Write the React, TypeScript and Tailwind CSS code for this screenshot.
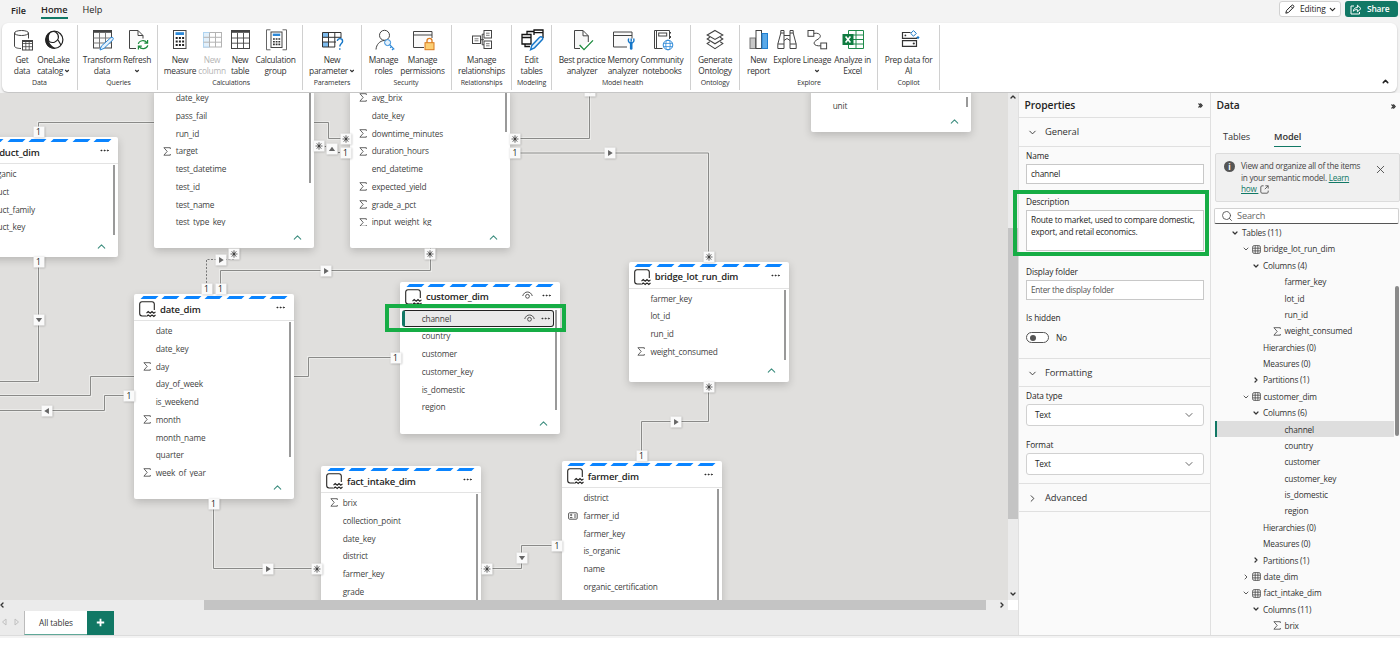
import type { ReactNode } from "react";
import { clsx } from "clsx";
import { ChevronDown, ChevronRight, ChevronUp, Ellipsis, Search, X } from "lucide-react";

type FieldType = { name: string; kind?: "sum" | "id"; selected?: boolean };

type TableType = {
  name?: string;
  x: number;
  y: number;
  height: number;
  thumb: number;
  inset?: number;
  hasEye?: boolean;
  fields: FieldType[];
};

type TagType = { x: number; y: number; mark: "1" | "*" | "right" | "left" | "up" | "down" };

type TreeRowType = {
  label: string;
  level: 0 | 1 | 2 | 3;
  open?: boolean;
  closed?: boolean;
  sum?: boolean;
  selected?: boolean;
};

const tables: TableType[] = [
  {
    name: "product_dim",
    x: -42,
    y: 44,
    height: 120,
    thumb: 70,
    fields: [{ name: "is_organic" }, { name: "product" }, { name: "product_family" }, { name: "product_key" }],
  },
  {
    x: 154,
    y: -4,
    height: 159,
    thumb: 94,
    fields: [
      { name: "date_key" },
      { name: "pass_fail" },
      { name: "run_id" },
      { name: "target", kind: "sum" },
      { name: "test_datetime" },
      { name: "test_id" },
      { name: "test_name" },
      { name: "test_type_key" },
    ],
  },
  {
    x: 350,
    y: -4,
    height: 159,
    thumb: 43,
    fields: [
      { name: "avg_brix", kind: "sum" },
      { name: "date_key" },
      { name: "downtime_minutes", kind: "sum" },
      { name: "duration_hours", kind: "sum" },
      { name: "end_datetime" },
      { name: "expected_yield", kind: "sum" },
      { name: "grade_a_pct", kind: "sum" },
      { name: "input_weight_kg", kind: "sum" },
    ],
  },
  { x: 811, y: -6, height: 45, thumb: 10, inset: 9.5, fields: [{ name: "unit" }] },
  {
    name: "date_dim",
    x: 134,
    y: 201,
    height: 204.5,
    thumb: 135,
    fields: [
      { name: "date" },
      { name: "date_key" },
      { name: "day", kind: "sum" },
      { name: "day_of_week" },
      { name: "is_weekend" },
      { name: "month", kind: "sum" },
      { name: "month_name" },
      { name: "quarter" },
      { name: "week_of_year", kind: "sum" },
    ],
  },
  {
    name: "customer_dim",
    x: 400,
    y: 188.5,
    height: 152.5,
    thumb: 100,
    hasEye: true,
    fields: [
      { name: "channel", selected: true },
      { name: "country" },
      { name: "customer" },
      { name: "customer_key" },
      { name: "is_domestic" },
      { name: "region" },
    ],
  },
  {
    name: "bridge_lot_run_dim",
    x: 628.7,
    y: 168.5,
    height: 120,
    thumb: 70,
    fields: [
      { name: "farmer_key" },
      { name: "lot_id" },
      { name: "run_id" },
      { name: "weight_consumed", kind: "sum" },
    ],
  },
  {
    name: "fact_intake_dim",
    x: 321,
    y: 373,
    height: 220,
    thumb: 160,
    fields: [
      { name: "brix", kind: "sum" },
      { name: "collection_point" },
      { name: "date_key" },
      { name: "district" },
      { name: "farmer_key" },
      { name: "grade" },
    ],
  },
  {
    name: "farmer_dim",
    x: 561.7,
    y: 368,
    height: 220,
    thumb: 160,
    fields: [
      { name: "district" },
      { name: "farmer_id", kind: "id" },
      { name: "farmer_key" },
      { name: "is_organic" },
      { name: "name" },
      { name: "organic_certification" },
    ],
  },
];

const links = [
  "M38.5 44V29.5H328.5V45.5H345",
  "M510 45.5H589.5V0",
  "M510 60H708.5V165",
  "M38.5 164V288.5H0",
  "M0 302.5H90.5V283.5H308.5V264.5H400",
  "M0 317.5H104.5V302.5H134",
  "M220.5 200V177.5H430.5V155",
  "M213.5 405V475.5H321",
  "M481 475.5H521.5V452.5H562",
  "M708.5 288V328.5H641.5V368",
];

const tags: TagType[] = [
  { x: 38.5, y: 38.5, mark: "1" },
  { x: 38.5, y: 169, mark: "1" },
  { x: 38.5, y: 226.5, mark: "down" },
  { x: 319, y: 53, mark: "*" },
  { x: 332, y: 56, mark: "up" },
  { x: 346, y: 45.5, mark: "*" },
  { x: 345.5, y: 60, mark: "1" },
  { x: 515, y: 45.5, mark: "*" },
  { x: 515, y: 60, mark: "1" },
  { x: 589.5, y: -2, mark: "down" },
  { x: 609.5, y: 60, mark: "right" },
  { x: 708.5, y: 163.5, mark: "*" },
  { x: 708.5, y: 293.5, mark: "*" },
  { x: 234, y: 160.5, mark: "*" },
  { x: 220.5, y: 166.5, mark: "right" },
  { x: 206.5, y: 195.5, mark: "1" },
  { x: 220.5, y: 195.5, mark: "1" },
  { x: 325.5, y: 177.5, mark: "right" },
  { x: 430, y: 160.5, mark: "*" },
  { x: 46.5, y: 317.5, mark: "left" },
  { x: 129, y: 303, mark: "1" },
  { x: 395.5, y: 264.5, mark: "1" },
  { x: 213.5, y: 410.5, mark: "1" },
  { x: 268, y: 475.5, mark: "right" },
  { x: 317, y: 475.5, mark: "*" },
  { x: 486.5, y: 475.5, mark: "*" },
  { x: 521.5, y: 464.5, mark: "down" },
  { x: 557, y: 453, mark: "1" },
  { x: 676, y: 328.5, mark: "right" },
  { x: 641.5, y: 363, mark: "1" },
];

const tree: TreeRowType[] = [
  { label: "Tables (11)", level: 0, open: true },
  { label: "bridge_lot_run_dim", level: 1, open: true },
  { label: "Columns (4)", level: 2, open: true },
  { label: "farmer_key", level: 3 },
  { label: "lot_id", level: 3 },
  { label: "run_id", level: 3 },
  { label: "weight_consumed", level: 3, sum: true },
  { label: "Hierarchies (0)", level: 2 },
  { label: "Measures (0)", level: 2 },
  { label: "Partitions (1)", level: 2, closed: true },
  { label: "customer_dim", level: 1, open: true },
  { label: "Columns (6)", level: 2, open: true },
  { label: "channel", level: 3, selected: true },
  { label: "country", level: 3 },
  { label: "customer", level: 3 },
  { label: "customer_key", level: 3 },
  { label: "is_domestic", level: 3 },
  { label: "region", level: 3 },
  { label: "Hierarchies (0)", level: 2 },
  { label: "Measures (0)", level: 2 },
  { label: "Partitions (1)", level: 2, closed: true },
  { label: "date_dim", level: 1, closed: true },
  { label: "fact_intake_dim", level: 1, open: true },
  { label: "Columns (11)", level: 2, open: true },
  { label: "brix", level: 3, sum: true },
];

/* ---------- small icons ---------- */

const Sigma = () => (
  <svg width="8" height="9" viewBox="0 0 8 9" fill="none" stroke="#555" strokeWidth="0.9">
    <path d="M7.3 2V0.7H0.9L4.2 4.4L0.9 8.2H7.3V7" />
  </svg>
);

const IdCard = () => (
  <svg width="10" height="8" viewBox="0 0 10 8" fill="none" stroke="#444" strokeWidth="0.9">
    <rect x="0.6" y="0.8" width="8.6" height="6.4" rx="1" />
    <path d="M2 5.6H4.4M6 3H8M6 5H8" />
    <circle cx="3.2" cy="3" r="0.7" />
  </svg>
);

const Eye = () => (
  <svg width="11" height="9" viewBox="0 0 11 9" fill="none" stroke="#444" strokeWidth="0.9">
    <path d="M0.7 5C1.5 2.4 3.3 1 5.5 1S9.5 2.4 10.3 5" />
    <circle cx="5.5" cy="5.3" r="1.9" />
  </svg>
);

const StorageIcon = () => (
  <svg width="17" height="17" viewBox="0 0 17 17" fill="none" stroke="#252423" strokeWidth="1.1">
    <path d="M7 15H3A2.4 2.4 0 0 1 0.7 12.6V3A2.4 2.4 0 0 1 3 0.7H13A2.4 2.4 0 0 1 15.3 3V9" />
    <path d="M7.5 12.2L9.2 10.6L11.2 12.2L13 10.6L14.8 12.2L16.5 10.8M7.5 15.5L9.2 13.9L11.2 15.5L13 13.9L14.8 15.5L16.5 14" />
  </svg>
);

const GridIcon = () => (
  <svg width="9" height="9" viewBox="0 0 9 9" fill="none" stroke="#444" strokeWidth="0.8">
    <rect x="0.6" y="0.6" width="7.8" height="7.8" rx="1.6" />
    <path d="M3.2 0.6V8.4M5.9 0.6V8.4M0.6 3.2H8.4M0.6 5.9H8.4" />
  </svg>
);

const DoubleChevron = () => (
  <svg width="5" height="5" viewBox="0 0 5 5" fill="none" stroke="#333" strokeWidth="1.1">
    <path d="M0.5 0.5L2.4 2.5L0.5 4.5M2.3 0.5L4.2 2.5L2.3 4.5" />
  </svg>
);

/* ---------- ribbon icons, all on a 24x22 grid ---------- */

const RibbonSvg = ({ children, faded }: { children: ReactNode; faded?: boolean }) => (
  <svg
    width="24"
    height="22"
    viewBox="0 0 24 22"
    fill="none"
    stroke="#444"
    strokeWidth="1"
    className={clsx("shrink-0", faded && "opacity-40")}
  >
    {children}
  </svg>
);

const icons = {
  getData: (
    <RibbonSvg>
      <path d="M4.5 4V17C4.5 18.5 7.5 19.5 11 19.5M18.5 4V9.5" />
      <ellipse cx="11.5" cy="4" rx="7" ry="2.5" />
      <rect x="12.5" y="11.5" width="10" height="9.5" fill="#fff" />
      <path d="M12.5 14.5H22.5M12.5 17.7H22.5M15.8 12V21M19.2 12V21" strokeWidth="0.8" />
      <path d="M12.5 12.2H22.5" strokeWidth="1.6" />
    </RibbonSvg>
  ),
  oneLake: (
    <RibbonSvg>
      <circle cx="12.3" cy="10.8" r="8.6" strokeWidth="1.2" stroke="#222" />
      <path d="M7 4.6C4.6 9.3 5.8 15.4 12.4 19C4.6 20 0.8 9.6 7 4.6Z" fill="#222" stroke="#222" />
      <path d="M8 3.6C12.8 0.6 17 4.5 16.4 9.2C15 13.4 10.5 14.5 7 12.5C5.8 9 6.2 5.6 8 3.6Z" stroke="#222" strokeWidth="1.1" />
      <path d="M15.8 10.6L19 16" stroke="#222" strokeWidth="1.1" />
    </RibbonSvg>
  ),
  transform: (
    <RibbonSvg>
      <rect x="3.5" y="1.5" width="18" height="17.5" fill="#fafafa" />
      <path d="M3.5 2.8H21.5" strokeWidth="2" />
      <path d="M3.5 9H21.5M3.5 14H21.5M9.5 4V19M15.5 4V19" stroke="#777" />
      <path d="M21 8.5C22.5 7.6 24 9.2 23 10.7L14 19.4L10 21L11.4 17Z" fill="#e4f1fc" stroke="#2b88d8" />
    </RibbonSvg>
  ),
  refresh: (
    <RibbonSvg>
      <path d="M11 19.5H4.5V1.5H13L18 6.5V9.5M13 1.5V6.5H18" fill="#fafafa" />
      <path d="M13.3 14.8C14.2 11.4 19.5 10.5 22 13.6M22.6 11V14.2H19.4M22.8 16.4C21.8 20 16.4 20.8 14 17.6M13.4 20.6V17.2H16.8" stroke="#1a8a3c" strokeWidth="1.2" />
    </RibbonSvg>
  ),
  measure: (
    <RibbonSvg>
      <rect x="5.5" y="1.5" width="12.5" height="18" fill="#fff" />
      <rect x="7.5" y="3.2" width="8.5" height="2.8" fill="#2b88d8" stroke="none" />
      <path d="M7.7 9H16.4M7.7 12.5H16.4M7.7 16H16.4" stroke="#222" strokeWidth="2" strokeDasharray="2 1.2" />
    </RibbonSvg>
  ),
  column: (
    <RibbonSvg faded>
      <rect x="3.5" y="3.5" width="18" height="14.5" />
      <rect x="3.5" y="3.5" width="6" height="14.5" fill="#b7dcf7" stroke="#3a96dd" />
      <path d="M3.5 8.3H21.5M3.5 13.2H21.5M9.5 3.5V18M15.5 3.5V18" />
    </RibbonSvg>
  ),
  table: (
    <RibbonSvg>
      <rect x="3.5" y="1.5" width="18" height="18" />
      <path d="M3.5 2.8H21.5" strokeWidth="2" />
      <path d="M3.5 9H21.5M3.5 14.2H21.5M9.5 4V19.5M15.5 4V19.5" strokeWidth="0.9" />
    </RibbonSvg>
  ),
  calcGroup: (
    <RibbonSvg>
      <path d="M6.5 0.8H2.5V20.8H6.5M18.5 0.8H22.5V20.8H18.5" stroke="#666" />
      <rect x="7" y="3" width="11" height="15.5" />
      <rect x="8.8" y="4.6" width="7.4" height="2.4" fill="#2b88d8" stroke="none" />
      <path d="M9 10H16.2M9 12.7H16.2M9 15.4H16.2" stroke="#333" strokeWidth="1.6" strokeDasharray="1.8 0.9" />
    </RibbonSvg>
  ),
  parameter: (
    <RibbonSvg>
      <rect x="2.5" y="3.5" width="6" height="4.8" fill="#7dbbed" stroke="none" />
      <rect x="2.5" y="13" width="6" height="5" fill="#7dbbed" stroke="none" />
      <path d="M15 18H2.5V3.5H21V9M2.5 8.3H21M2.5 13H16M8.5 3.5V18M14.8 3.5V18" stroke="#333" />
      <path d="M17.4 12C17.4 8.8 22.6 8.8 22.6 12.2C22.6 14.6 19.8 14.3 19.8 17.4M19.8 19.2V20.8" stroke="#1576c8" strokeWidth="1.4" />
    </RibbonSvg>
  ),
  roles: (
    <RibbonSvg>
      <circle cx="12.5" cy="6.3" r="5" />
      <path d="M4 20.5C4.4 15.5 7.5 12 12.5 11.4" />
      <circle cx="15.6" cy="13.6" r="3" stroke="#2b88d8" fill="#e4f1fc" />
      <path d="M17.6 15.6L22.3 20.3M21.5 19.4L20 21M19.5 17.5L18.2 18.8" stroke="#2b88d8" strokeWidth="1.2" />
    </RibbonSvg>
  ),
  permissions: (
    <RibbonSvg>
      <path d="M13 18.5H2.5V2.5H21V9M2.5 6H21" fill="#fafafa" />
      <path d="M16 14V11.6C16 8.6 21 8.6 21 11.6V14" stroke="#d97a1e" strokeWidth="1.3" />
      <rect x="14" y="13.7" width="9" height="7" fill="#fccf74" stroke="#d97a1e" />
    </RibbonSvg>
  ),
  relationships: (
    <RibbonSvg>
      <rect x="2.5" y="7" width="8" height="7.5" />
      <rect x="14" y="1.5" width="7.5" height="7.5" />
      <rect x="14" y="12" width="7.5" height="7.5" />
      <path d="M10.5 10.7H14M12.2 5.2V15.8M12.2 5.2H14M12.2 15.8H14" />
      <path d="M4.5 9.8H8.5M4.5 11.8H8.5M16 4.2H19.6M16 6.3H19.6M16 14.7H19.6M16 16.8H19.6" strokeWidth="0.7" />
    </RibbonSvg>
  ),
  edit: (
    <RibbonSvg>
      <path d="M2 5.5H11V15H2ZM2 8.5H11M7 5V2.5H14M14 6V1H23V9M14 3.6H23M5 15V17.5H10" stroke="#111" strokeWidth="1.3" />
      <path d="M19.6 8.2C21.4 6.8 23.6 8.8 22.4 10.6L14.5 18.8L10.6 20.6L11.8 16.4Z" fill="#e4f1fc" stroke="#1576c8" strokeWidth="1.4" />
    </RibbonSvg>
  ),
  bestPractice: (
    <RibbonSvg>
      <path d="M10 19.5H4.5V1.5H13L18.3 6.8V13M13 1.5V6.8H18.3" fill="#f7f7f7" />
      <path d="M9.6 16L14 20.6L23 11.4" stroke="#1a8a3c" strokeWidth="1.3" />
    </RibbonSvg>
  ),
  memory: (
    <RibbonSvg>
      <path d="M16 18H2.5V3H21V9.5M2.5 6.5H21" fill="#fafafa" />
      <path d="M20.2 13.5V19.5" stroke="#1576c8" strokeWidth="2.6" strokeLinecap="round" />
      <path d="M17.8 9.5C16.6 12.2 18.2 14 20.2 14S23.6 12.2 22.6 9.5M20.2 9.5V12" stroke="#1576c8" strokeWidth="1.4" />
    </RibbonSvg>
  ),
  community: (
    <RibbonSvg>
      <path d="M12.5 19.5H4.5V1.5H19.5V10M6.5 1.5V19.5M20.5 3V4.5M20.5 7V9" />
      <rect x="8.7" y="4" width="8" height="3" />
      <circle cx="18" cy="16" r="4.8" stroke="#2b88d8" fill="#fff" />
      <ellipse cx="18" cy="16" rx="2.2" ry="4.8" stroke="#2b88d8" strokeWidth="0.8" />
      <path d="M13.4 14.4H22.6M13.4 17.6H22.6" stroke="#2b88d8" strokeWidth="0.8" />
    </RibbonSvg>
  ),
  ontology: (
    <RibbonSvg>
      <path d="M12 1.5L19.8 6L12 10.4L4.2 6ZM6.8 8.2L4.2 10L12 14.8L19.8 10L17.2 8.2M6.8 12.8L4.2 14.6L12 19.6L19.8 14.6L17.2 12.8" strokeWidth="1.1" />
    </RibbonSvg>
  ),
  report: (
    <RibbonSvg>
      <rect x="3" y="9" width="5.5" height="10.5" fill="#c8c8c8" stroke="#777" />
      <rect x="9" y="1.5" width="5.5" height="18" fill="#fff" />
      <rect x="15" y="4.5" width="5.5" height="15" fill="#5aa9e8" stroke="#1f7fd1" />
    </RibbonSvg>
  ),
  explore: (
    <RibbonSvg>
      <path d="M5.8 4L2.8 15.2V19.5H9V4ZM5.8 4V1.5H9V4M15 4V19.5H21.2V15.2L18.2 4ZM15 4V1.5H18.2V4M2.8 15H9M15 15H21.2M9 6.5H15M9 11.5L12 9.5L15 11.5" />
    </RibbonSvg>
  ),
  lineage: (
    <RibbonSvg>
      <rect x="3" y="1.5" width="5.8" height="5.8" />
      <rect x="15.8" y="14" width="5.8" height="5.8" />
      <path d="M8.8 4.4C15 3.2 17.6 7.4 13 10.2C6.5 13.4 8.6 17.4 15.8 16.8" />
    </RibbonSvg>
  ),
  excel: (
    <RibbonSvg>
      <path d="M7.5 1.5H22.5V19.5H7.5ZM15 1.5V19.5M7.5 6H22.5M7.5 10.5H22.5M7.5 15H22.5" stroke="#1e8a4a" />
      <rect x="1.5" y="5" width="11" height="11" fill="#107c41" stroke="none" />
      <path d="M4.6 7.6L9.4 13.4M9.4 7.6L4.6 13.4" stroke="#fff" strokeWidth="1.6" />
    </RibbonSvg>
  ),
  prep: (
    <RibbonSvg>
      <path d="M13.5 3.5H5.5V9.3H19.5V8.6M5.5 11.6H19.5V17.4H5.5Z" strokeWidth="1.2" stroke="#333" />
      <circle cx="8.4" cy="6.4" r="0.9" fill="#333" stroke="none" />
      <circle cx="16.8" cy="14.5" r="1.1" fill="#333" stroke="none" />
      <path d="M16.5 1.6L19.3 4.4L16.5 7.2L13.7 4.4Z" stroke="#1576c8" fill="#fff" />
      <path d="M21 7L22.6 8.6L21 10.2L19.4 8.6Z" fill="#1576c8" stroke="none" />
    </RibbonSvg>
  ),
};

type RibbonItemType = {
  icon: ReactNode;
  lines: [string, string];
  width: string;
  arrow?: boolean;
  disabled?: boolean;
};

const ribbon: { label: string; box: string; items: RibbonItemType[] }[] = [
  {
    label: "Data",
    box: "w-[76px] pl-[4px]",
    items: [
      { icon: icons.getData, lines: ["Get", "data"], width: "w-[32px]" },
      { icon: icons.oneLake, lines: ["OneLake", "catalog"], width: "w-[31px]", arrow: true },
    ],
  },
  {
    label: "Queries",
    box: "w-[80px] pl-[6px]",
    items: [
      { icon: icons.transform, lines: ["Transform", "data"], width: "w-[36px]" },
      { icon: icons.refresh, lines: ["Refresh", ""], width: "w-[34px]", arrow: true },
    ],
  },
  {
    label: "Calculations",
    box: "w-[145px] pl-[6px]",
    items: [
      { icon: icons.measure, lines: ["New", "measure"], width: "w-[32px]" },
      { icon: icons.column, lines: ["New", "column"], width: "w-[32px]", disabled: true },
      { icon: icons.table, lines: ["New", "table"], width: "w-[24px]" },
      { icon: icons.calcGroup, lines: ["Calculation", "group"], width: "w-[47px]" },
    ],
  },
  {
    label: "Parameters",
    box: "w-[59px]",
    items: [{ icon: icons.parameter, lines: ["New", "parameter"], width: "w-[58px]", arrow: true }],
  },
  {
    label: "Security",
    box: "w-[90px] pl-[3px]",
    items: [
      { icon: icons.roles, lines: ["Manage", "roles"], width: "w-[37px]" },
      { icon: icons.permissions, lines: ["Manage", "permissions"], width: "w-[41px]" },
    ],
  },
  {
    label: "Relationships",
    box: "w-[60px]",
    items: [{ icon: icons.relationships, lines: ["Manage", "relationships"], width: "w-[59px]" }],
  },
  {
    label: "Modeling",
    box: "w-[40px]",
    items: [{ icon: icons.edit, lines: ["Edit", "tables"], width: "w-[39px]" }],
  },
  {
    label: "Model health",
    box: "w-[139px] pl-[7px]",
    items: [
      { icon: icons.bestPractice, lines: ["Best practice", "analyzer"], width: "w-[46px]" },
      { icon: icons.memory, lines: ["Memory", "analyzer"], width: "w-[36px]" },
      { icon: icons.community, lines: ["Community", "notebooks"], width: "w-[42px]" },
    ],
  },
  {
    label: "Ontology",
    box: "w-[49px]",
    items: [{ icon: icons.ontology, lines: ["Generate", "Ontology"], width: "w-[48px]" }],
  },
  {
    label: "Explore",
    box: "w-[138px] pl-[5px]",
    items: [
      { icon: icons.report, lines: ["New", "report"], width: "w-[27px]" },
      { icon: icons.explore, lines: ["Explore", ""], width: "w-[30px]" },
      { icon: icons.lineage, lines: ["Lineage", ""], width: "w-[30px]", arrow: true },
      { icon: icons.excel, lines: ["Analyze in", "Excel"], width: "w-[41px]" },
    ],
  },
  {
    label: "Copilot",
    box: "w-[62px]",
    items: [{ icon: icons.prep, lines: ["Prep data for", "AI"], width: "w-[61px]" }],
  },
];

const RibbonItem = ({ item }: { item: RibbonItemType }) => (
  <div
    className={clsx(
      "flex shrink-0 flex-col items-center whitespace-nowrap text-[8.4px] leading-[11.5px] tracking-[-0.28px]",
      item.width,
      item.disabled ? "text-[#b5b5b5]" : "text-[#333]",
    )}
  >
    {item.icon}
    <span className="mt-[2.5px]">{item.lines[0]}</span>
    <span className="flex h-[11.5px] items-center gap-[1px]">
      {item.lines[1]}
      {item.arrow && <ChevronDown size={6} strokeWidth={4.5} />}
    </span>
  </div>
);

const Ribbon = () => (
  <div className="mx-[2px] mr-[3px] flex h-[69px] rounded-[6px] bg-white shadow-[0_1px_2px_rgba(0,0,0,0.25)]">
    {ribbon.map((group) => (
      <div key={group.label} className="flex shrink-0 py-[2px]">
        <div className={clsx("flex flex-col border-r border-[#d0d0d0]", group.box)}>
          <div className="flex h-[53px] pt-[4px]">
            {group.items.map((item) => (
              <RibbonItem key={item.lines.join()} item={item} />
            ))}
          </div>
          <span
            className={clsx(
              "self-center whitespace-nowrap text-[7px] leading-[10px] tracking-[-0.15px] text-[#333]",
              group.items.length > 1 && "-translate-x-[2px]",
            )}
          >
            {group.label}
          </span>
        </div>
      </div>
    ))}
    <div className="flex flex-1 items-end justify-end pr-[7px] pb-[6px]">
      <ChevronUp size={9} strokeWidth={4} color="#222" />
    </div>
  </div>
);

const TopBar = () => (
  <div className="flex h-[23px] items-start pl-[11px] text-[9.2px] text-[#252423]">
    <span className="mt-[4px] text-[9px] leading-[13px] font-semibold">File</span>
    <div className="ml-[15px] flex flex-col">
      <span className="mt-[3px] leading-[13px] font-semibold">Home</span>
      <span className="mt-[1px] h-[2px] bg-[#117865]" />
    </div>
    <span className="mt-[3px] ml-[15px] leading-[13px]">Help</span>
    <div className="ml-auto flex gap-[4px] pt-[1px] text-[8.4px] tracking-[-0.15px]">
      <button className="flex h-[16px] w-[62px] items-center rounded-[3px] border border-[#d1d1d1] bg-white pl-[5px]">
        <svg width="10" height="10" viewBox="0 0 10 10" fill="none" stroke="#222" strokeWidth="1">
          <path d="M6.6 1.4C7.5 0.3 9.6 1.8 8.6 3.2L3.4 8.5L0.8 9.2L1.5 6.6ZM5.8 2.3L7.7 4.2" />
        </svg>
        <span className="ml-[5px] font-medium">Editing</span>
        <ChevronDown size={9} strokeWidth={3} className="ml-[2px]" />
      </button>
      <button className="mr-[2px] flex h-[16px] w-[53px] items-center rounded-[3px] bg-[#117865] pl-[5px] font-semibold text-white">
        <svg width="12" height="11" viewBox="0 0 12 11" fill="none" stroke="#fff" strokeWidth="1">
          <path d="M4 2H1V10H9.5V8M3.4 7.2C3.6 4.6 5 3.6 7.4 3.6V1.2L11 4.6L7.4 7.8V5.6C5.6 5.4 4.4 6 3.4 7.2Z" />
        </svg>
        <span className="ml-[5px]">Share</span>
      </button>
    </div>
  </div>
);

/* ---------- model canvas ---------- */

const Field = ({ field }: { field: FieldType }) => (
  <div
    className={clsx(
      "flex h-[17.75px] shrink-0 items-center",
      field.selected && "ml-[2px] w-[152px] rounded-[3px] border border-[#222] border-l-[3px] border-l-[#117865] bg-[#e9e9e9]",
    )}
  >
    <span className={clsx("flex shrink-0 justify-end pr-[5px]", field.selected ? "w-[16.7px]" : "w-[21.7px]")}>
      {field.kind === "sum" && <Sigma />}
      {field.kind === "id" && <IdCard />}
    </span>
    <span className="pt-[1px]">{field.name}</span>
    {field.selected && (
      <span className="mr-[2px] ml-auto flex items-center gap-[5px] pt-[1px]">
        <Eye />
        <Ellipsis size={11} color="#333" />
      </span>
    )}
  </div>
);

const TableCard = ({ table }: { table: TableType }) => (
  <div
    className="absolute flex w-[160px] flex-col rounded-[2px] bg-white shadow-[0_3px_8px_rgba(0,0,0,0.18)]"
    style={{ left: table.x, top: table.y, height: table.height, paddingTop: table.inset }}
  >
    {table.name && (
      <div className="h-[27px] shrink-0 border-b border-[#e3e3e3] pt-[2px]">
        <div className="flex justify-between px-[7.5px]">
          {[0, 1, 2, 3, 4, 5, 6].map((i) => (
            <span key={i} className="h-[3px] w-[15.2px] -skew-x-[45deg] bg-[#0a84ff]" />
          ))}
        </div>
        <div className="flex items-start pt-[2px] pl-[5px]">
          <StorageIcon />
          <span className="mt-[1.5px] ml-[4px] text-[9.5px] leading-[14px] font-semibold tracking-[-0.22px] text-[#252423]">
            {table.name}
          </span>
          <span className="mt-[1px] mr-[8px] ml-auto flex items-center gap-[8px]">
            {table.hasEye && <Eye />}
            <Ellipsis size={11} color="#222" />
          </span>
        </div>
      </div>
    )}
    <div className={clsx("flex min-h-0 flex-1 justify-between", table.name && "pt-[1px]")}>
      <div className="flex flex-1 flex-col overflow-hidden text-[8.3px] tracking-[-0.17px] whitespace-nowrap text-[#3f3f3f]">
        {table.fields.map((field) => (
          <Field key={field.name} field={field} />
        ))}
      </div>
      <span className="mr-[3px] w-[2px] shrink-0 bg-[#999]" style={{ height: table.thumb }} />
    </div>
    <div className="flex h-[22px] shrink-0 items-center justify-end pr-[10.5px]">
      <ChevronUp size={13} strokeWidth={2} color="#3f8f80" />
    </div>
  </div>
);

const arrows = {
  right: "M2 0.5L8 4.5L2 8.5Z",
  left: "M7 0.5L1 4.5L7 8.5Z",
  up: "M0.5 7L4.5 1.5L8.5 7Z",
  down: "M0.5 2L4.5 7.5L8.5 2Z",
};

const Tag = ({ tag }: { tag: TagType }) => (
  <span
    className="absolute flex h-[11px] w-[11px] -translate-x-1/2 -translate-y-1/2 items-center justify-center bg-[#fafafa] text-[8.5px] leading-none text-[#222] shadow-[0_0_2px_rgba(0,0,0,0.25)]"
    style={{ left: tag.x, top: tag.y }}
  >
    {tag.mark === "1" && "1"}
    {tag.mark === "*" && (
      <svg width="9" height="9" viewBox="0 0 9 9" stroke="#222" strokeWidth="0.9">
        <path d="M4.5 0.8V8.2M1 4.5H8" strokeWidth="0.7" />
        <path d="M2.2 1.8L6.8 7.2M6.8 1.8L2.2 7.2" strokeWidth="0.7" />
      </svg>
    )}
    {tag.mark !== "1" && tag.mark !== "*" && (
      <svg width="7" height="7" viewBox="0 0 9 9" fill="#666">
        <path d={arrows[tag.mark]} />
      </svg>
    )}
  </span>
);

const Canvas = () => (
  <div className="relative h-[507px] w-[1008px] shrink-0 overflow-hidden bg-[#e0dfdd]">
    <svg width="1008" height="507" fill="none" className="absolute inset-0">
      {links.map((d) => (
        <g key={d}>
          <path d={d} stroke="#ebebe9" strokeWidth="3" />
          <path d={d} stroke="#8a8a88" strokeWidth="1" />
        </g>
      ))}
      <path d="M234 166.5H206.5V195M314 53.5H326M338 59.5H345" stroke="#777" strokeDasharray="2 1.5" />
    </svg>
    {tables.map((table) => (
      <TableCard key={`${table.x}-${table.y}`} table={table} />
    ))}
    {tags.map((tag) => (
      <Tag key={`${tag.x}-${tag.y}`} tag={tag} />
    ))}
    <div className="absolute top-[211px] left-[385px] h-[28px] w-[181px] border-4 border-[#16ad45]" />
  </div>
);

const CanvasPane = () => (
  <div className="flex w-[1018px] shrink-0 flex-col">
    <div className="flex">
      <Canvas />
      <div className="flex h-[507px] w-[10px] flex-col items-center bg-[#ebebeb]">
        <ChevronUp size={8} strokeWidth={4} color="#333" />
        <div className="mt-[127px] h-[291px] w-full bg-[#c4c4c4]" />
        <ChevronDown size={8} strokeWidth={4} color="#333" className="mt-auto mb-[2px]" />
      </div>
    </div>
    <div className="flex h-[10px] w-[1008px] items-center bg-[#ebebeb]">
      <ChevronRight size={8} strokeWidth={4} color="#333" className="-ml-[2px] rotate-180" />
      <div className="ml-[198px] h-full w-[782px] bg-[#c4c4c4]" />
      <ChevronRight size={8} strokeWidth={4} color="#333" className="mr-[2px] ml-auto" />
    </div>
    <div className="flex h-[26px] items-start bg-[#ebebeb]">
      <div className="flex h-[25px] w-[24px] items-center justify-between px-[1px]">
        <svg width="22" height="8" viewBox="0 0 22 8" fill="none" stroke="#c0c0c0">
          <path d="M5 1V7L1.5 4ZM14 1V7L17.5 4Z" />
        </svg>
      </div>
      <div className="mt-[1px] flex h-[24px] w-[63px] items-center justify-center border-b-[1.5px] border-l border-b-[#5fa898] border-l-[#bbb] bg-white pt-[2px] text-[8.3px] font-medium tracking-[-0.1px] text-[#333]">
        All tables
      </div>
      <div className="mt-[1px] flex h-[24px] w-[27px] items-center justify-center bg-[#117865]">
        <svg width="9" height="9" viewBox="0 0 9 9" stroke="#fff" strokeWidth="1.8">
          <path d="M4.5 0.8V8.2M0.8 4.5H8.2" />
        </svg>
      </div>
    </div>
  </div>
);

/* ---------- side panels ---------- */

const Section = ({ label, open, className }: { label: string; open?: boolean; className: string }) => (
  <div className={clsx("flex shrink-0 items-center border-[#e0e0e0] pl-[8px] text-[9.4px] tracking-[-0.08px] text-[#333]", className)}>
    {open ? <ChevronDown size={11} strokeWidth={2} /> : <ChevronRight size={11} strokeWidth={2} />}
    <span className="ml-[7px]">{label}</span>
  </div>
);

const Label = ({ text, className }: { text: string; className?: string }) => (
  <div className={clsx("text-[8.3px] leading-[12px] font-medium tracking-[-0.1px] text-[#252423]", className)}>{text}</div>
);

const Select = ({ value }: { value: string }) => (
  <div className="mt-[2px] flex h-[22px] w-[178px] items-center justify-between rounded-[3px] border border-[#d1d1d1] bg-white pr-[8px] pl-[8px] text-[8.3px]">
    <span>{value}</span>
    <ChevronDown size={12} strokeWidth={1.8} color="#555" />
  </div>
);

const Properties = () => (
  <div className="flex w-[192px] shrink-0 flex-col border-l border-[#e0e0e0] bg-[#fafafa] text-[8.3px] tracking-[-0.2px] text-[#252423]">
    <div className="flex h-[25px] shrink-0 items-center justify-between border-b border-[#e0e0e0] pt-[1px] pr-[7px] pl-[5.5px]">
      <span className="text-[10.3px] font-semibold tracking-[-0.1px]">Properties</span>
      <DoubleChevron />
    </div>
    <Section label="General" open className="h-[29px] border-b" />
    <div className="flex flex-col pl-[7px]">
      <Label text="Name" className="mt-[3px]" />
      <div className="mt-[2px] flex h-[20px] w-[178px] items-center border border-[#c8c8c8] bg-white pt-[1px] pl-[4px]">
        channel
      </div>
      <div className="relative mt-[12px]">
        <Label text="Description" />
        <div className="mt-[2px] h-[41px] w-[178px] border border-[#c8c8c8] bg-white pt-[3px] pl-[4px] leading-[11.5px]">
          Route to market, used to compare domestic,
          <br />
          export, and retail economics.
        </div>
        <div className="absolute -top-[6px] -left-[13px] h-[66px] w-[196px] border-4 border-[#16ad45]" />
      </div>
      <Label text="Display folder" className="mt-[15px]" />
      <div className="mt-[2px] flex h-[20px] w-[178px] items-center border border-[#c8c8c8] bg-white pl-[4px] tracking-[-0.3px] text-[#555]">
        Enter the display folder
      </div>
      <Label text="Is hidden" className="mt-[12px]" />
      <div className="mt-[8px] flex h-[11px] items-center">
        <div className="flex h-[11px] w-[23px] items-center rounded-full border border-[#555] bg-white pl-[3px]">
          <span className="h-[6px] w-[6px] rounded-full bg-[#555]" />
        </div>
        <span className="ml-[7px] pt-[1px]">No</span>
      </div>
    </div>
    <Section label="Formatting" open className="mt-[15px] h-[29px] border-y pt-[2px]" />
    <div className="flex flex-col pl-[7px]">
      <Label text="Data type" className="mt-[3px]" />
      <Select value="Text" />
      <Label text="Format" className="mt-[13px]" />
      <Select value="Text" />
    </div>
    <Section label="Advanced" className="mt-[8px] h-[29px] border-y pt-[1px]" />
  </div>
);

const indent = {
  0: "pl-[14px]",
  1: "pl-[24.5px]",
  2: "pl-[35px]",
  3: "pl-[55.5px]",
};

const TreeRow = ({ row }: { row: TreeRowType }) => (
  <div
    className={clsx(
      "flex h-[16.39px] w-[179px] shrink-0 items-center border-l-2 text-[#333]",
      indent[row.level],
      row.selected ? "border-[#117865] bg-[#dedede]" : "border-transparent",
      (row.level === 0 || row.level === 2) && "font-medium tracking-[-0.2px]",
    )}
  >
    {row.level < 3 ? (
      <span className={clsx("shrink-0", row.level === 1 ? "w-[10px]" : "w-[11px]")}>
        {row.open && <ChevronDown size={8} strokeWidth={row.level === 1 ? 2.4 : 3.6} />}
        {row.closed && <ChevronRight size={8} strokeWidth={row.level === 1 ? 2.4 : 3.6} />}
      </span>
    ) : (
      <span className="w-[12px] shrink-0">{row.sum && <Sigma />}</span>
    )}
    {row.level === 1 && (
      <span className="mr-[3px] shrink-0">
        <GridIcon />
      </span>
    )}
    <span className="pt-[1px]">{row.label}</span>
  </div>
);

const DataPanel = () => (
  <div className="flex w-[190px] shrink-0 flex-col overflow-hidden border-l border-[#e0e0e0] bg-[#fafafa] text-[8.3px] tracking-[-0.15px] text-[#333]">
    <div className="flex h-[25px] shrink-0 items-center justify-between pt-[1px] pr-[4px] pl-[5.5px] text-[#252423]">
      <span className="text-[10.3px] font-semibold">Data</span>
      <DoubleChevron />
    </div>
    <div className="mt-[12px] flex h-[17px] shrink-0 gap-[24px] pl-[12px] text-[9.2px] tracking-[-0.1px]">
      <span className="leading-[14px]">Tables</span>
      <span className="border-b-[1.5px] border-[#117865] leading-[14px] font-semibold">Model</span>
    </div>
    <div className="mt-[6px] ml-[4px] flex h-[49px] shrink-0 rounded-[2px] border border-[#dcdcdc] bg-[#f0f0f0] pt-[6px] pl-[8px]">
      <span className="mt-[1px] flex h-[11px] w-[11px] shrink-0 items-center justify-center rounded-full bg-[#555] text-[8px] leading-none font-bold text-white">
        i
      </span>
      <p className="ml-[6px] w-[128px] text-[8.2px] leading-[11.5px] tracking-[-0.26px] whitespace-nowrap text-[#444]">
        View and organize all of the items
        <br />
        in your semantic model. <span className="text-[#117865] underline">Learn</span>
        <br />
        <span className="text-[#117865] underline">how </span>
        <svg width="9" height="9" viewBox="0 0 9 9" fill="none" stroke="#555" strokeWidth="0.9" className="ml-[2px] inline-block">
          <path d="M3.6 0.8H2A1.3 1.3 0 0 0 0.8 2V7A1.3 1.3 0 0 0 2 8.2H7A1.3 1.3 0 0 0 8.2 7V5.6M5.4 0.8H8.2V3.6M8.2 0.8L4.8 4.2" />
        </svg>
      </p>
      <X size={13} strokeWidth={1.6} color="#444" className="mt-[3px] ml-[5px]" />
    </div>
    <div className="mt-[6px] mr-[1px] ml-[3px] flex h-[16px] shrink-0 items-center rounded-[2px] border border-[#d1d1d1] border-b-[#555] bg-white pl-[6px] text-[9.2px] text-[#666]">
      <Search size={12} strokeWidth={1.8} color="#555" />
      <span className="ml-[4px]">Search</span>
    </div>
    <div className="flex min-h-0 flex-1 justify-between overflow-hidden pl-[4px]">
      <div className="flex flex-col pt-[0.6px]">
        {tree.map((row, i) => (
          <TreeRow key={i} row={row} />
        ))}
      </div>
      <span className="mt-[62px] mr-[1px] h-[150px] w-[4px] shrink-0 rounded-full bg-[#8a8a8a]" />
    </div>
  </div>
);

export default function App() {
  return (
    <div className="flex h-[664px] w-[1400px] flex-col overflow-hidden bg-white font-['Open_Sans','Noto_Sans',sans-serif]">
      <div className="h-[93px] shrink-0 bg-[#f3f3f3]">
        <TopBar />
        <Ribbon />
      </div>
      <div className="flex h-[543px] shrink-0 border-b border-[#dcdcdc]">
        <CanvasPane />
        <Properties />
        <DataPanel />
      </div>
      <div className="h-[2px] shrink-0 bg-[#f3f3f3]" />
    </div>
  );
}
